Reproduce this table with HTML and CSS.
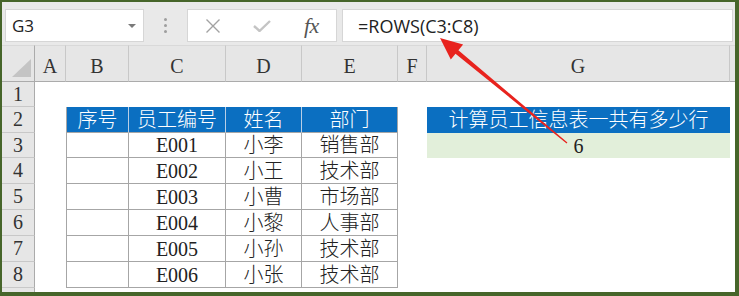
FILE: index.html
```html
<!DOCTYPE html>
<html lang="zh">
<head>
<meta charset="utf-8">
<title>ROWS</title>
<link rel="stylesheet" href="styles.css">
</head>
<body>
<div class="frame">
  <div class="toolbar">
    <div class="namebox"><span class="ref">G3</span><span class="caret"></span></div>
    <div class="grip"><i></i><i></i><i></i></div>
    <div class="fxbox">
      <span class="slot"><svg width="16" height="16" viewBox="0 0 16 16"><path d="M1.5 1.5 L14.5 14.5 M14.5 1.5 L1.5 14.5" stroke="#a2a2a2" stroke-width="1.4" fill="none"/></svg></span>
      <span class="slot"><svg width="18" height="12" viewBox="0 0 18 12"><path d="M1 6 L6.5 11 L17 1" stroke="#c4c4c4" stroke-width="2.4" fill="none"/></svg></span>
      <span class="slot fx">fx</span>
    </div>
    <div class="formula">=ROWS(C3:C8)</div>
  </div>
  <div class="sheet">
    <div class="corner"><svg width="19" height="18" viewBox="0 0 19 18"><polygon points="19,0 19,18 0,18" fill="#c4c4c4"/></svg></div>
    <div class="ch">A</div><div class="ch">B</div><div class="ch">C</div><div class="ch">D</div><div class="ch">E</div><div class="ch">F</div><div class="ch">G</div><div class="ch pad"></div>

    <div class="rh">1</div><div class="c"></div><div class="c"></div><div class="c"></div><div class="c"></div><div class="c"></div><div class="c"></div><div class="c"></div><div class="c"></div>

    <div class="rh">2</div><div class="c"></div><div class="th first">序号</div><div class="th">员工编号</div><div class="th">姓名</div><div class="th last">部门</div><div class="c"></div><div class="th wide">计算员工信息表一共有多少行</div><div class="c"></div>

    <div class="rh">3</div><div class="c"></div><div class="td first"></div><div class="td">E001</div><div class="td">小李</div><div class="td">销售部</div><div class="c"></div><div class="res">6</div><div class="c"></div>

    <div class="rh">4</div><div class="c"></div><div class="td first"></div><div class="td">E002</div><div class="td">小王</div><div class="td">技术部</div><div class="c"></div><div class="c"></div><div class="c"></div>

    <div class="rh">5</div><div class="c"></div><div class="td first"></div><div class="td">E003</div><div class="td">小曹</div><div class="td">市场部</div><div class="c"></div><div class="c"></div><div class="c"></div>

    <div class="rh">6</div><div class="c"></div><div class="td first"></div><div class="td">E004</div><div class="td">小黎</div><div class="td">人事部</div><div class="c"></div><div class="c"></div><div class="c"></div>

    <div class="rh">7</div><div class="c"></div><div class="td first"></div><div class="td">E005</div><div class="td">小孙</div><div class="td">技术部</div><div class="c"></div><div class="c"></div><div class="c"></div>

    <div class="rh">8</div><div class="c"></div><div class="td first"></div><div class="td">E006</div><div class="td">小张</div><div class="td">技术部</div><div class="c"></div><div class="c"></div><div class="c"></div>

    <div class="rh tail"></div><div class="c"></div><div class="c"></div><div class="c"></div><div class="c"></div><div class="c"></div><div class="c"></div><div class="c"></div><div class="c"></div>
  </div>
</div>
<svg class="arrow" width="739" height="296" viewBox="0 0 739 296">
  <polygon points="440,38 450.8,59.4 455.5,53.8 566.6,143.5 567.4,142.5 458.4,50.2 463.1,44.6" fill="#e8231e"/>
</svg>
</body>
</html>
```

FILE: styles.css
```css
* { box-sizing: border-box; }
html, body { margin: 0; padding: 0; }
body {
  position: relative;
  width: 739px;
  height: 296px;
  overflow: hidden;
  background: #fff;
  font-family: "Liberation Serif", "Noto Sans CJK SC", serif;
  color: #222;
}
.frame {
  width: 739px;
  height: 296px;
  border-style: solid;
  border-color: #46652a;
  border-width: 2px 4px 4px 2px;
  display: flex;
  flex-direction: column;
  background: #e9e9e9;
}
.toolbar {
  height: 43px;
  flex: none;
  display: flex;
  align-items: flex-start;
  padding: 7px 2px 0 3px;
}
.namebox {
  width: 139px;
  height: 33px;
  background: #fff;
  border: 1px solid #d6d6d6;
  display: flex;
  align-items: center;
  justify-content: space-between;
  padding: 0 7px 0 6px;
}
.ref {
  font-family: "Open Sans", "Noto Sans", sans-serif;
  font-size: 17px;
  color: #222;
}
.caret {
  width: 0;
  height: 0;
  border-left: 4px solid transparent;
  border-right: 4px solid transparent;
  border-top: 4px solid #7a7a7a;
}
.grip {
  width: 43px;
  height: 33px;
  display: flex;
  flex-direction: column;
  align-items: center;
  justify-content: center;
  gap: 3px;
}
.grip i {
  display: block;
  width: 3px;
  height: 3px;
  border-radius: 50%;
  background: #9e9e9e;
}
.fxbox {
  width: 150px;
  height: 33px;
  background: #fff;
  border: 1px solid #d6d6d6;
  display: flex;
  align-items: center;
  margin-right: 5px;
}
.slot {
  width: 50px;
  display: flex;
  justify-content: center;
  align-items: center;
}
.fx {
  font-family: "Liberation Serif", serif;
  font-style: italic;
  font-size: 22px;
  color: #555;
  letter-spacing: -0.5px;
}
.formula {
  flex: 1;
  height: 33px;
  background: #fff;
  border: 1px solid #d6d6d6;
  display: flex;
  align-items: center;
  padding-left: 15px;
  font-family: "Open Sans", "Noto Sans", sans-serif;
  font-size: 18px;
  color: #222;
}
.sheet {
  flex: 1;
  display: grid;
  grid-template-columns: 33px 31px 63px 97px 76px 96px 29px 303px 1fr;
  grid-template-rows: 37px 25px 26px 25px 26px 26px 26px 26px 26px 1fr;
  background: #fff;
}
.corner, .ch {
  background: #e6e6e6;
  border-top: 1px solid #d9d9d9;
  border-bottom: 1px solid #ababab;
  border-right: 1px solid #c8c8c8;
}
.corner {
  display: flex;
  align-items: flex-end;
  justify-content: flex-end;
  padding: 0 3px 4px 0;
  border-right-color: #ababab;
}
.ch {
  display: flex;
  align-items: flex-end;
  justify-content: center;
  padding-bottom: 3px;
  font-size: 20px;
  line-height: 24px;
  color: #333;
}
.ch.pad { border-right: none; }
.rh {
  background: #e6e6e6;
  border-right: 1px solid #ababab;
  border-bottom: 1px solid #c8c8c8;
  display: flex;
  align-items: center;
  justify-content: center;
  font-size: 20px;
  color: #333;
}
.rh.tail { border-bottom: none; }
.c { background: #fff; }
.th, .td, .res {
  display: flex;
  align-items: center;
  justify-content: center;
  font-size: 20px;
  line-height: 24px;
  font-weight: 300;
  white-space: nowrap;
}
.th {
  background: #0b6fc1;
  color: #fff;
  border-right: 1px solid #b9cfe6;
  border-bottom: 1px solid #a6a6a6;
}
.th.first { border-left: 1px solid #a6a6a6; }
.th.last { border-right: 1px solid #a6a6a6; }
.th.wide { border: none; }
.td {
  background: #fff;
  color: #222;
  border-right: 1px solid #a6a6a6;
  border-bottom: 1px solid #a6a6a6;
}
.td.first { border-left: 1px solid #a6a6a6; }
.res {
  background: #e2efda;
  color: #222;
}
.arrow {
  position: absolute;
  left: 0;
  top: 0;
  pointer-events: none;
}
```
